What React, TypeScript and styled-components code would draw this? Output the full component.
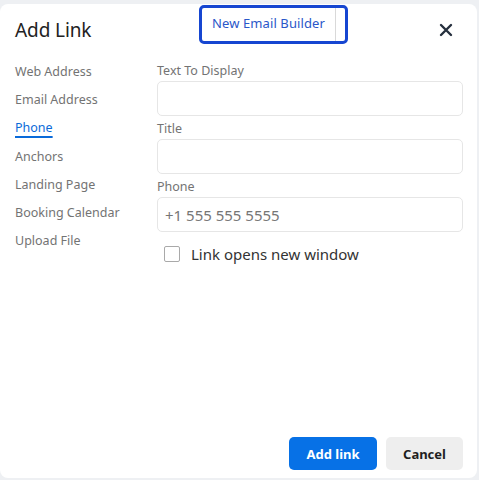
import React from 'react'
import styled, { createGlobalStyle } from 'styled-components'

const GlobalStyle = createGlobalStyle`
    html, body {
        margin: 0;
        padding: 0;
        background: #eef0f3;
        font-family: 'Noto Sans', 'Open Sans', sans-serif;
    }
    * {
        box-sizing: border-box;
    }
`

const TABS = [
    'Web Address',
    'Email Address',
    'Phone',
    'Anchors',
    'Landing Page',
    'Booking Calendar',
    'Upload File',
]

export default function App() {
    const [active, setActive] = React.useState<string>('Phone')
    const [checked, setChecked] = React.useState<boolean>(false)

    return (
        <>
            <GlobalStyle />
            <Page>
                <Dialog>
                    <Header>
                        <Title>Add Link</Title>
                        <CloseButton aria-label="Close">
                            <svg width="14" height="14" viewBox="0 0 14 14">
                                <path
                                    d="M2 2 L12 12 M12 2 L2 12"
                                    stroke="#26303e"
                                    strokeWidth="2.4"
                                    strokeLinecap="round"
                                />
                            </svg>
                        </CloseButton>
                    </Header>
                    <Body>
                        <Nav>
                            {TABS.map((t) => (
                                <NavItem
                                    key={t}
                                    $active={t === active}
                                    onClick={() => setActive(t)}
                                >
                                    {t}
                                </NavItem>
                            ))}
                        </Nav>
                        <Form>
                            <Field>
                                <Label>Text To Display</Label>
                                <Input />
                            </Field>
                            <Field>
                                <Label>Title</Label>
                                <Input />
                            </Field>
                            <Field>
                                <Label>Phone</Label>
                                <Input placeholder="+1 555 555 5555" />
                            </Field>
                            <CheckRow onClick={() => setChecked(!checked)}>
                                <Box $checked={checked} />
                                <span>Link opens new window</span>
                            </CheckRow>
                        </Form>
                    </Body>
                    <Footer>
                        <Button $primary>Add link</Button>
                        <Button>Cancel</Button>
                    </Footer>
                    <BuilderBadge>
                        <BuilderTab>New Email Builder</BuilderTab>
                    </BuilderBadge>
                </Dialog>
            </Page>
        </>
    )
}

const Page = styled.div`
    width: 479px;
    height: 480px;
    padding: 4px 2px 2px 0;
`
const Dialog = styled.div`
    position: relative;
    height: 474px;
    background: #fff;
    border-radius: 8px;
    display: flex;
    flex-direction: column;
`
const Header = styled.div`
    display: flex;
    align-items: center;
    justify-content: space-between;
    padding: 0 24px 0 15px;
    height: 52px;
`
const Title = styled.div`
    font-size: 19px;
    color: #222;
    font-weight: 400;
    letter-spacing: -0.1px;
`
const CloseButton = styled.button`
    border: none;
    background: none;
    padding: 0;
    width: 14px;
    height: 14px;
    display: flex;
    cursor: pointer;
`
const Body = styled.div`
    display: flex;
    flex: 1;
    padding: 0 14px 0 15px;
`
const Nav = styled.div`
    width: 142px;
    display: flex;
    flex-direction: column;
    padding-top: 7px;
`
const NavItem = styled.div<{ $active?: boolean }>`
    align-self: flex-start;
    font-size: 12.5px;
    line-height: 18px;
    height: 28.2px;
    color: ${(p) => (p.$active ? '#0a6ad9' : '#737373')};
    cursor: pointer;
    ${(p) =>
        p.$active &&
        `
        text-decoration: underline;
        text-decoration-thickness: 2px;
        text-underline-offset: 4px;
    `}
`
const Form = styled.div`
    flex: 1;
    display: flex;
    flex-direction: column;
    padding-top: 6px;
`
const Field = styled.div`
    display: flex;
    flex-direction: column;
    margin-bottom: 4px;
`
const Label = styled.label`
    font-size: 12.5px;
    line-height: 18px;
    color: #737373;
    margin-bottom: 1px;
`
const Input = styled.input`
    height: 35px;
    border: 1px solid #e6e6e6;
    border-radius: 5px;
    padding: 0 7px;
    font-family: inherit;
    font-size: 15px;
    color: #333;
    outline: none;
    &::placeholder {
        color: #767676;
    }
`
const CheckRow = styled.div`
    display: flex;
    align-items: center;
    gap: 11px;
    height: 20px;
    margin-top: 8px;
    padding-left: 7px;
    font-size: 15px;
    color: #333;
    cursor: pointer;
`
const Box = styled.div<{ $checked: boolean }>`
    width: 16px;
    height: 16px;
    border: 1px solid #a9a9a9;
    border-radius: 2px;
    background: ${(p) => (p.$checked ? '#0a6ad9' : '#fff')};
`
const Footer = styled.div`
    display: flex;
    justify-content: flex-end;
    gap: 9px;
    padding: 0 14px 8px 0;
`
const Button = styled.button<{ $primary?: boolean }>`
    height: 33px;
    padding: 0 16px;
    min-width: ${(p) => (p.$primary ? '88px' : '77px')};
    border: none;
    border-radius: 5px;
    font-family: inherit;
    font-size: 13px;
    font-weight: 700;
    background: ${(p) => (p.$primary ? '#0771e6' : '#eeeeee')};
    color: ${(p) => (p.$primary ? '#fff' : '#1f1f1f')};
    cursor: pointer;
`
const BuilderBadge = styled.div`
    position: absolute;
    top: 1px;
    left: 199px;
    width: 149px;
    height: 39px;
    border: 3px solid #1646d1;
    border-radius: 5px;
    background: #fff;
    display: flex;
`
const BuilderTab = styled.div`
    width: 134px;
    border-right: 1px solid #d9d9d9;
    display: flex;
    align-items: flex-start;
    justify-content: center;
    padding-top: 6px;
    font-size: 13px;
    color: #2a57c9;
    letter-spacing: 0.1px;
`
